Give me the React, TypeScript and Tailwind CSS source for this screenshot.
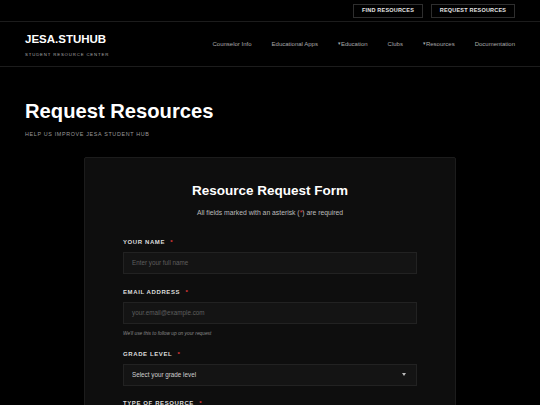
const navItems = [
  { label: 'Counselor Info' },
  { label: 'Educational Apps' },
  { label: 'Education', caret: true },
  { label: 'Clubs' },
  { label: 'Resources', caret: true },
  { label: 'Documentation' },
];

function Label({ text }: { text: string }) {
  return (
    <div className="text-[6px] font-bold tracking-[0.6px] text-[#dddddd] leading-none mb-[7px]">
      {text} <span className="text-[#e03a3a] ml-[3px]">*</span>
    </div>
  );
}

export default function App() {
  return (
    <div className="min-h-screen bg-black text-white" style={{ fontFamily: '"Liberation Sans", Arial, sans-serif' }}>
      {/* top utility bar */}
      <div className="h-[22px] border-b border-[#1c1c1c] flex items-center justify-end gap-[8px] pr-[25px]">
        <button className="h-[14px] w-[70px] border border-[#2e2e2e] text-[5.5px] font-bold tracking-[0.2px] text-[#e5e5e5]">
          FIND RESOURCES
        </button>
        <button className="h-[14px] w-[84px] border border-[#2e2e2e] text-[5.5px] font-bold tracking-[0.2px] text-[#e5e5e5]">
          REQUEST RESOURCES
        </button>
      </div>

      {/* header */}
      <header className="h-[45px] border-b border-[#1c1c1c] flex items-center justify-between pl-[25px] pr-[25px]">
        <div className="pt-[3px]">
          <div className="text-[11.5px] font-bold leading-none">JESA.STUHUB</div>
          <div className="text-[4.3px] tracking-[0.85px] text-[#aaaaaa] mt-[7px] leading-none">STUDENT RESOURCE CENTER</div>
        </div>
        <nav className="flex items-center gap-[20px] text-[6px] text-[#a8a8a8] pt-[1px]">
          {navItems.map((n) => (
            <span key={n.label}>
              {n.caret && <span className="text-[4.5px] align-middle">▾</span>}
              {n.label}
            </span>
          ))}
        </nav>
      </header>

      {/* page heading */}
      <section className="pl-[25px] pt-[34px] pb-[19px]">
        <h1 className="text-[20.2px] font-bold leading-none">Request Resources</h1>
        <p className="text-[5.4px] tracking-[0.65px] text-[#9a9a9a] mt-[11px] leading-none">HELP US IMPROVE JESA STUDENT HUB</p>
      </section>

      {/* form card */}
      <div className="mx-auto w-[372px] bg-[#0e0e0e] border border-[#1c1c1c] rounded-[2px] px-[38px] pt-[26px] pb-[20px]">
        <h2 className="text-center text-[13.5px] font-bold leading-none">Resource Request Form</h2>
        <p className="text-center text-[6.8px] text-[#bbbbbb] mt-[13px] leading-none">
          All fields marked with an asterisk (<span className="text-[#e03a3a]">*</span>) are required
        </p>

        <div className="mt-[22px]">
          <Label text="YOUR NAME" />
          <div className="h-[22px] bg-[#141414] border border-[#222222] flex items-center px-[8px] text-[6.3px] text-[#5f5f5f]">
            Enter your full name
          </div>
        </div>

        <div className="mt-[15px]">
          <Label text="EMAIL ADDRESS" />
          <div className="h-[22px] bg-[#141414] border border-[#222222] flex items-center px-[8px] text-[6.3px] text-[#5f5f5f]">
            your.email@example.com
          </div>
          <div className="text-[4.8px] italic text-[#8a8a8a] mt-[8px] leading-none">We'll use this to follow up on your request</div>
        </div>

        <div className="mt-[14px]">
          <Label text="GRADE LEVEL" />
          <div className="h-[22px] bg-[#141414] border border-[#222222] flex items-center justify-between px-[8px] text-[6.3px] text-[#d0d0d0]">
            <span>Select your grade level</span>
            <svg width="4" height="3" viewBox="0 0 4 3" className="mr-[2px]">
              <path d="M0 0H4L2 3Z" fill="#bbbbbb" />
            </svg>
          </div>
        </div>

        <div className="mt-[14px]">
          <Label text="TYPE OF RESOURCE" />
          <div className="h-[22px] bg-[#141414] border border-[#222222]" />
        </div>
      </div>
    </div>
  );
}
